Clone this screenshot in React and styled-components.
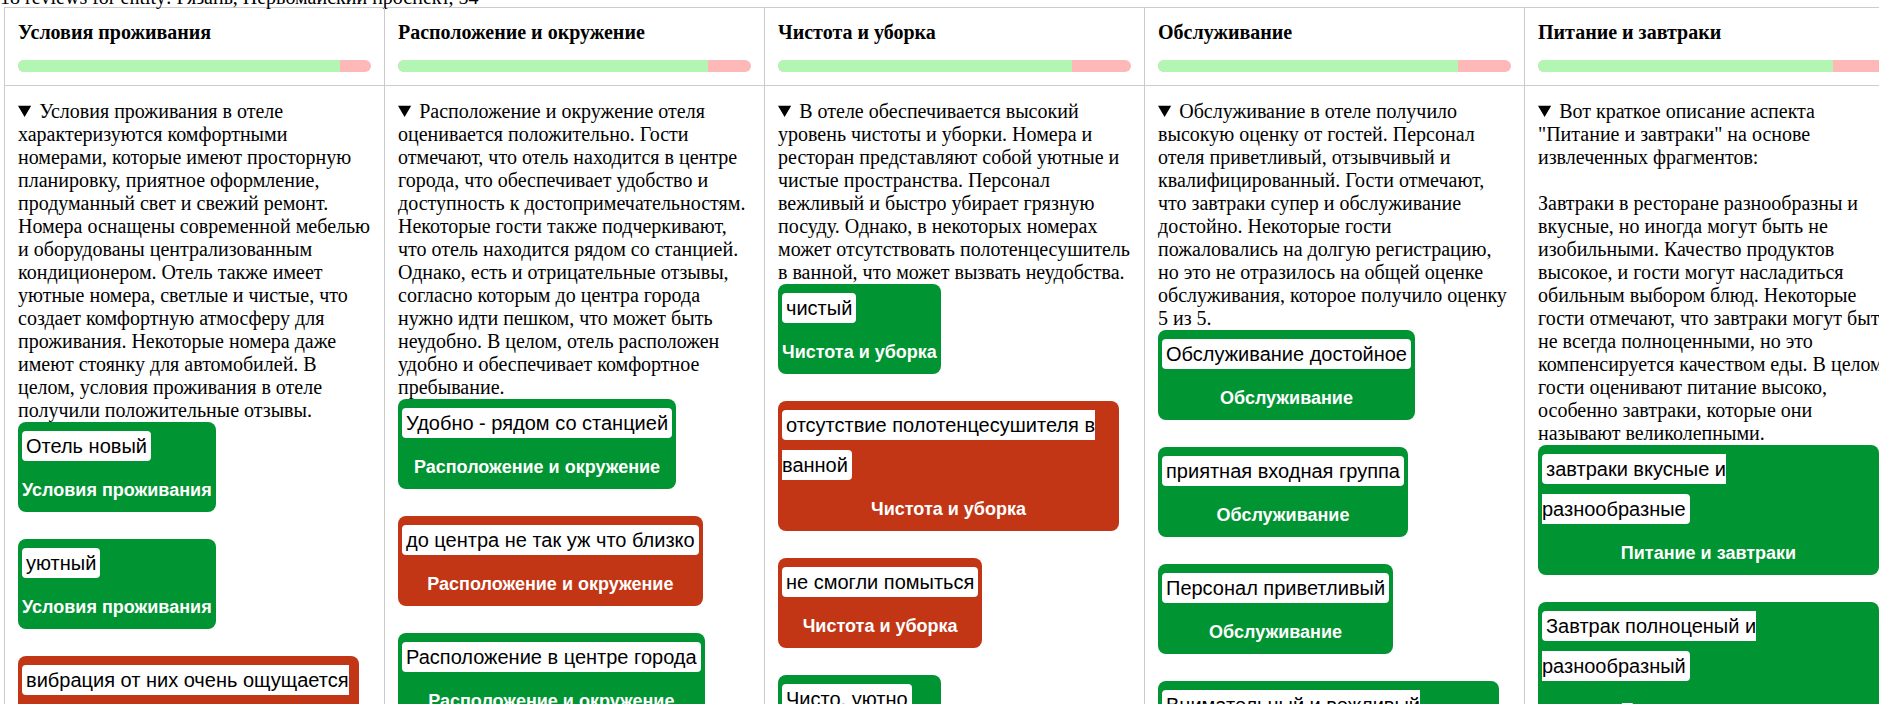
import React from 'react';
import styled, { createGlobalStyle } from 'styled-components';

const GlobalStyle = createGlobalStyle`
    html, body {
        margin: 0;
        padding: 0;
        overflow: hidden;
        background: #fff;
    }
    body {
        font-family: "Liberation Serif", "Times New Roman", serif;
        font-size: 20px;
        line-height: 23px;
        color: #000;
    }
`;

const Caption = styled.div`
    margin: -14px 0 -2px;
    white-space: nowrap;
`;

const Board = styled.div`
    display: grid;
    grid-template-columns: repeat(5, 380px);
    width: max-content;
    margin-left: 4px;
    border-top: 1px solid #ccc;
    border-left: 1px solid #ccc;
`;

const Cell = styled.div`
    box-sizing: border-box;
    padding: ${p => (p.$head ? '13px' : '14px 13px 13px')};
    border-right: 1px solid #ccc;
    border-bottom: 1px solid #ccc;
`;

const Title = styled.div`
    font-weight: bold;
`;

const Bar = styled.div`
    display: flex;
    height: 12px;
    margin-top: 16px;
    border-radius: 6px;
    overflow: hidden;
    background: #ffb8b8;
`;

const BarFill = styled.div`
    background: #b3f5b3;
`;

const Summary = styled.summary`
    white-space: pre-line;
    cursor: pointer;
`;

const CardList = styled.div`
    display: flex;
    flex-direction: column;
    align-items: flex-start;
    gap: 27px;
`;

const Card = styled.div`
    box-sizing: border-box;
    max-width: 341px;
    padding: 4px 4px 2px;
    border-radius: 8px;
    background: ${p => (p.$good ? '#009432' : '#c23616')};
    font-family: "Liberation Sans", Arial, sans-serif;
`;

const Label = styled.div`
    font-size: 20px;
    line-height: 40px;
`;

const Chip = styled.span`
    background: #fff;
    color: #000;
    padding: 4px;
    border-radius: 4px;
`;

const Category = styled.div`
    margin-top: 4px;
    font-size: 18px;
    font-weight: bold;
    line-height: 40px;
    text-align: center;
    color: #fff;
`;

const aspects = [
    {
        title: 'Условия проживания',
        positive: 91.2,
        summary:
            'Условия проживания в отеле характеризуются комфортными номерами, которые имеют просторную планировку, приятное оформление, продуманный свет и свежий ремонт. Номера оснащены современной мебелью и оборудованы централизованным кондиционером. Отель также имеет уютные номера, светлые и чистые, что создает комфортную атмосферу для проживания. Некоторые номера даже имеют стоянку для автомобилей. В целом, условия проживания в отеле получили положительные отзывы.',
        tags: [
            { text: 'Отель новый', good: true },
            { text: 'уютный', good: true },
            { text: 'вибрация от них очень ощущается ночью', good: false }
        ]
    },
    {
        title: 'Расположение и окружение',
        positive: 87.8,
        summary:
            'Расположение и окружение отеля оценивается положительно. Гости отмечают, что отель находится в центре города, что обеспечивает удобство и доступность к достопримечательностям. Некоторые гости также подчеркивают, что отель находится рядом со станцией. Однако, есть и отрицательные отзывы, согласно которым до центра города нужно идти пешком, что может быть неудобно. В целом, отель расположен удобно и обеспечивает комфортное пребывание.',
        tags: [
            { text: 'Удобно - рядом со станцией', good: true },
            { text: 'до центра не так уж что близко', good: false },
            { text: 'Расположение в центре города', good: true }
        ]
    },
    {
        title: 'Чистота и уборка',
        positive: 83.3,
        summary:
            'В отеле обеспечивается высокий уровень чистоты и уборки. Номера и ресторан представляют собой уютные и чистые пространства. Персонал вежливый и быстро убирает грязную посуду. Однако, в некоторых номерах может отсутствовать полотенцесушитель в ванной, что может вызвать неудобства.',
        tags: [
            { text: 'чистый', good: true },
            { text: 'отсутствие полотенцесушителя в ванной', good: false },
            { text: 'не смогли помыться', good: false },
            { text: 'Чисто, уютно', good: true }
        ]
    },
    {
        title: 'Обслуживание',
        positive: 85,
        summary:
            'Обслуживание в отеле получило высокую оценку от гостей. Персонал отеля приветливый, отзывчивый и квалифицированный. Гости отмечают, что завтраки супер и обслуживание достойно. Некоторые гости пожаловались на долгую регистрацию, но это не отразилось на общей оценке обслуживания, которое получило оценку 5 из 5.',
        tags: [
            { text: 'Обслуживание достойное', good: true },
            { text: 'приятная входная группа', good: true },
            { text: 'Персонал приветливый', good: true },
            { text: 'Внимательный и вежливый персонал', good: true }
        ]
    },
    {
        title: 'Питание и завтраки',
        positive: 83.6,
        summary:
            'Вот краткое описание аспекта "Питание и завтраки" на основе извлеченных фрагментов:\n\nЗавтраки в ресторане разнообразны и вкусные, но иногда могут быть не изобильными. Качество продуктов высокое, и гости могут насладиться обильным выбором блюд. Некоторые гости отмечают, что завтраки могут быть не всегда полноценными, но это компенсируется качеством еды. В целом, гости оценивают питание высоко, особенно завтраки, которые они называют великолепными.',
        tags: [
            { text: 'завтраки вкусные и разнообразные', good: true },
            { text: 'Завтрак полноценый и разнообразный', good: true }
        ]
    }
];

const App = () => {
    return (
        <>
            <GlobalStyle />
            <Caption>18 reviews for entity: Рязань, Первомайский проспект, 54</Caption>
            <Board>
                {aspects.map(aspect => (
                    <Cell $head key={'h-' + aspect.title}>
                        <Title>{aspect.title}</Title>
                        <Bar>
                            <BarFill style={{ width: aspect.positive + '%' }} />
                        </Bar>
                    </Cell>
                ))}
                {aspects.map(aspect => (
                    <Cell key={'b-' + aspect.title}>
                        <details open>
                            <Summary>{aspect.summary}</Summary>
                        </details>
                        <CardList>
                            {aspect.tags.map(tag => (
                                <Card $good={tag.good} key={tag.text}>
                                    <Label>
                                        <Chip>{tag.text}</Chip>
                                    </Label>
                                    <Category>{aspect.title}</Category>
                                </Card>
                            ))}
                        </CardList>
                    </Cell>
                ))}
            </Board>
        </>
    );
};

export default App;
